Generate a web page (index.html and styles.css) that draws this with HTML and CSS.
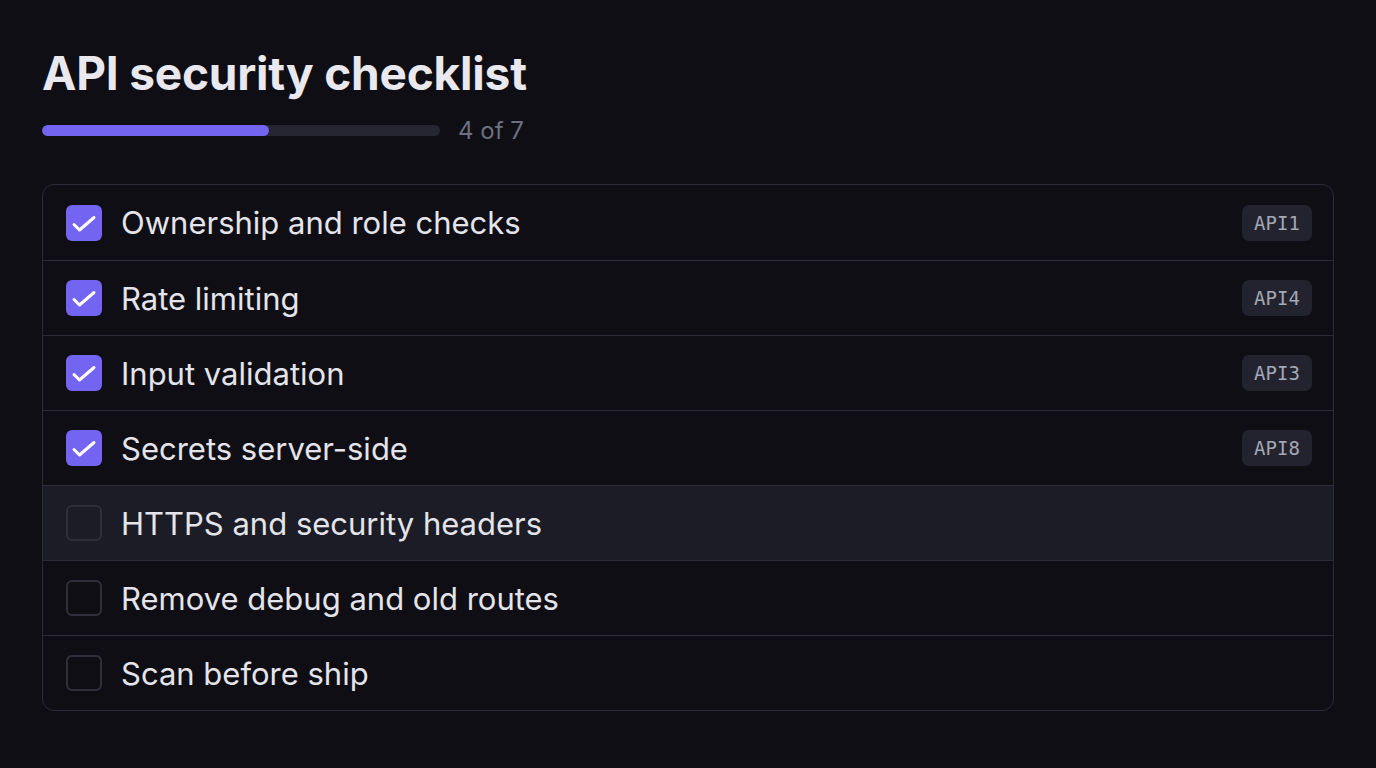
FILE: index.html
```html
<!DOCTYPE html>
<html lang="en">
<head>
<meta charset="utf-8">
<title>API security checklist</title>
<link rel="stylesheet" href="styles.css">
</head>
<body>
<main class="page">
  <h1 class="title">API security checklist</h1>
  <div class="progress">
    <div class="track"><div class="fill" style="width: 57.14%"></div></div>
    <span class="count">4 of 7</span>
  </div>
  <ul class="list">
    <li class="item done">
      <span class="box"><svg viewBox="0 0 36 36" class="tick"><path d="M8 19.5l5.5 5.5 14.5-12.5"/></svg></span>
      <span class="label">Ownership and role checks</span>
      <span class="tag">API1</span>
    </li>
    <li class="item done">
      <span class="box"><svg viewBox="0 0 36 36" class="tick"><path d="M8 19.5l5.5 5.5 14.5-12.5"/></svg></span>
      <span class="label">Rate limiting</span>
      <span class="tag">API4</span>
    </li>
    <li class="item done">
      <span class="box"><svg viewBox="0 0 36 36" class="tick"><path d="M8 19.5l5.5 5.5 14.5-12.5"/></svg></span>
      <span class="label">Input validation</span>
      <span class="tag">API3</span>
    </li>
    <li class="item done">
      <span class="box"><svg viewBox="0 0 36 36" class="tick"><path d="M8 19.5l5.5 5.5 14.5-12.5"/></svg></span>
      <span class="label">Secrets server-side</span>
      <span class="tag">API8</span>
    </li>
    <li class="item hover">
      <span class="box"></span>
      <span class="label">HTTPS and security headers</span>
    </li>
    <li class="item">
      <span class="box"></span>
      <span class="label">Remove debug and old routes</span>
    </li>
    <li class="item">
      <span class="box"></span>
      <span class="label">Scan before ship</span>
    </li>
  </ul>
</main>
</body>
</html>
```
FILE: styles.css
```css
* { box-sizing: border-box; }
html, body {
  margin: 0;
  background: #0e0e14;
  color: #e6e6ec;
  font-family: Inter, "Noto Sans", sans-serif;
}
.page {
  padding: 45px 42px 0 42px;
}
.title {
  margin: 0;
  font-size: 46px;
  line-height: 56px;
  font-weight: 700;
  letter-spacing: -0.2px;
  color: #e8e8ee;
}
.progress {
  display: flex;
  align-items: center;
  gap: 18px;
  margin-top: 15px;
  height: 28px;
}
.track {
  width: 398px;
  height: 11px;
  border-radius: 6px;
  background: #252631;
  overflow: hidden;
}
.fill {
  height: 100%;
  border-radius: 6px;
  background: #7364f1;
}
.count {
  font-size: 24px;
  color: #6d7080;
}
.list {
  list-style: none;
  margin: 40px 0 0 0;
  padding: 0;
  width: 1292px;
  border: 1px solid #2b2c37;
  border-radius: 12px;
  overflow: hidden;
}
.item {
  display: flex;
  align-items: center;
  height: 75px;
  padding: 0 21px 0 23px;
  border-top: 1px solid #2b2c37;
}
.item:first-child {
  border-top: none;
}
.item.hover {
  background: #1b1c25;
}
.box {
  flex: none;
  width: 36px;
  height: 36px;
  border-radius: 6px;
  border: 2px solid #2e2f3a;
  display: flex;
  align-items: center;
  justify-content: center;
}
.done .box {
  background: #7364f1;
  border: none;
}
.tick {
  width: 36px;
  height: 36px;
  fill: none;
  stroke: #ffffff;
  stroke-width: 3;
  stroke-linecap: round;
  stroke-linejoin: round;
}
.label {
  flex: 1;
  margin-left: 19px;
  font-size: 31px;
  color: #e4e4ea;
}
.tag {
  flex: none;
  width: 70px;
  height: 36px;
  border-radius: 7px;
  background: #22232e;
  color: #a4a7b4;
  font-family: "DejaVu Sans Mono", monospace;
  font-size: 19px;
  display: flex;
  align-items: center;
  justify-content: center;
}
```
